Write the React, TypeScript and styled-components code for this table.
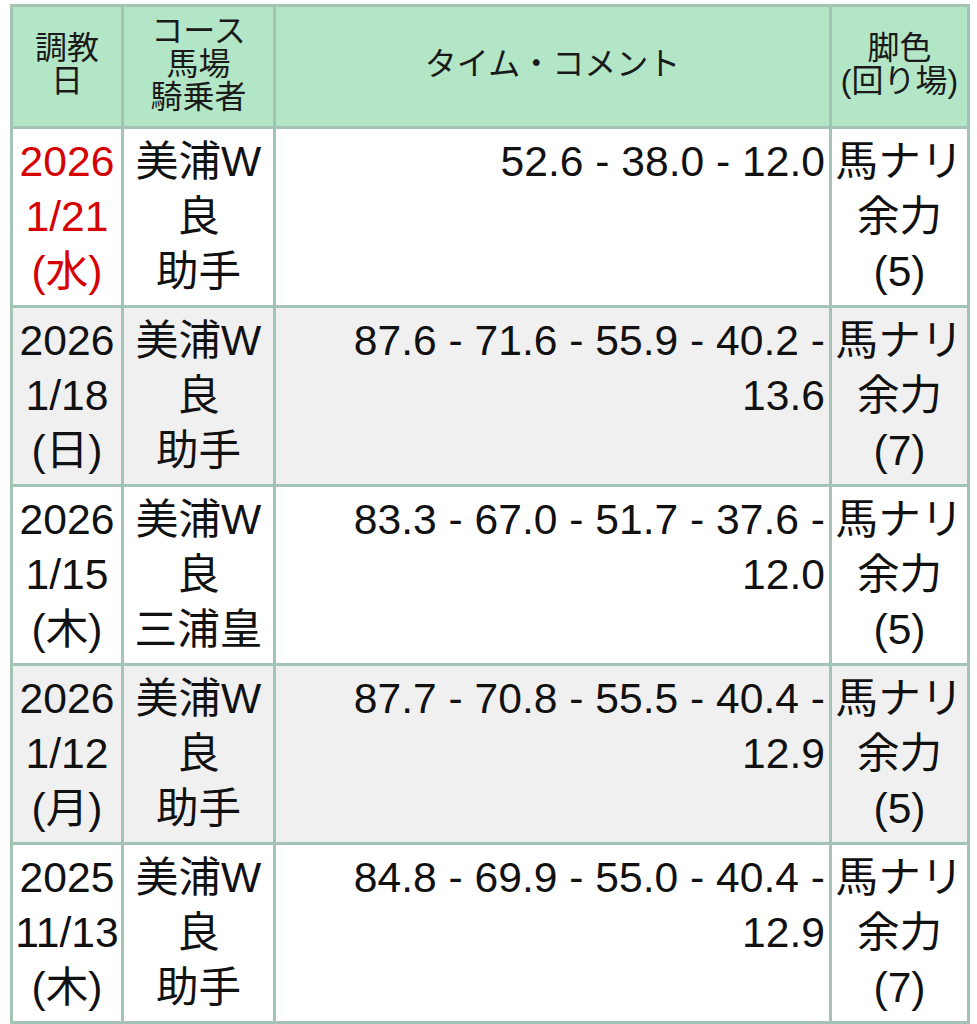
import React from "react";
import styled, { createGlobalStyle } from "styled-components";

interface WorkoutRow {
    year: string;
    date: string;
    day: string;
    course: string;
    track: string;
    rider: string;
    times: string;
    pace: string;
    effort: string;
    lap: string;
    latest?: boolean;
}

const rows: WorkoutRow[] = [
    { year: "2026", date: "1/21", day: "(水)", course: "美浦W", track: "良", rider: "助手", times: "52.6 - 38.0 - 12.0", pace: "馬ナリ", effort: "余力", lap: "(5)", latest: true },
    { year: "2026", date: "1/18", day: "(日)", course: "美浦W", track: "良", rider: "助手", times: "87.6 - 71.6 - 55.9 - 40.2 - 13.6", pace: "馬ナリ", effort: "余力", lap: "(7)" },
    { year: "2026", date: "1/15", day: "(木)", course: "美浦W", track: "良", rider: "三浦皇", times: "83.3 - 67.0 - 51.7 - 37.6 - 12.0", pace: "馬ナリ", effort: "余力", lap: "(5)" },
    { year: "2026", date: "1/12", day: "(月)", course: "美浦W", track: "良", rider: "助手", times: "87.7 - 70.8 - 55.5 - 40.4 - 12.9", pace: "馬ナリ", effort: "余力", lap: "(5)" },
    { year: "2025", date: "11/13", day: "(木)", course: "美浦W", track: "良", rider: "助手", times: "84.8 - 69.9 - 55.0 - 40.4 - 12.9", pace: "馬ナリ", effort: "余力", lap: "(7)" },
];

function App(): React.ReactElement {
    return (
        <>
            <GlobalStyle />
            <Table>
                <colgroup>
                    <col style={{ width: "111px" }} />
                    <col style={{ width: "152px" }} />
                    <col style={{ width: "556px" }} />
                    <col style={{ width: "138px" }} />
                </colgroup>
                <thead>
                    <tr>
                        <HeadCell>調教<br />日</HeadCell>
                        <HeadCell>コース<br />馬場<br />騎乗者</HeadCell>
                        <HeadCell>タイム・コメント</HeadCell>
                        <HeadCell>脚色<br />(回り場)</HeadCell>
                    </tr>
                </thead>
                <tbody>
                    {rows.map((r, i) => (
                        <Row key={i} $shaded={i % 2 === 1}>
                            <DateCell $latest={!!r.latest}>
                                {r.year}<br />{r.date}<br />{r.day}
                            </DateCell>
                            <Cell>{r.course}<br />{r.track}<br />{r.rider}</Cell>
                            <TimeCell>{r.times}</TimeCell>
                            <Cell>{r.pace}<br />{r.effort}<br />{r.lap}</Cell>
                        </Row>
                    ))}
                </tbody>
            </Table>
        </>
    );
}

const GlobalStyle = createGlobalStyle`
    body {
        margin: 0;
        background: #ffffff;
        font-family: "Liberation Sans", "Noto Sans CJK JP", sans-serif;
        color: #111111;
    }
`;

const Table = styled.table`
    margin: 4px 0 0 10px;
    width: 957px;
    table-layout: fixed;
    border-collapse: collapse;
    border: 3px solid #a3c4b5;
`;

const HeadCell = styled.th`
    height: 115px;
    padding: 0 0 4px;
    background: #b2e6c6;
    border: 3px solid #a3c4b5;
    font-weight: normal;
    font-size: 32px;
    line-height: 33px;
    text-align: center;
    vertical-align: middle;
    color: #1a1a1a;
`;

const Row = styled.tr<{ $shaded: boolean }>`
    background: ${(p) => (p.$shaded ? "#f0f0f0" : "#ffffff")};
`;

const Cell = styled.td`
    height: 179px;
    box-sizing: border-box;
    padding: 5px 0 2px;
    border: 3px solid #a3c4b5;
    font-size: 42.6px;
    line-height: 55px;
    text-align: center;
    vertical-align: top;
`;

const DateCell = styled(Cell)<{ $latest: boolean }>`
    color: ${(p) => (p.$latest ? "#d60000" : "#111111")};
`;

const TimeCell = styled(Cell)`
    padding: 5px 4px 2px 8px;
    text-align: right;
`;

export default App;
